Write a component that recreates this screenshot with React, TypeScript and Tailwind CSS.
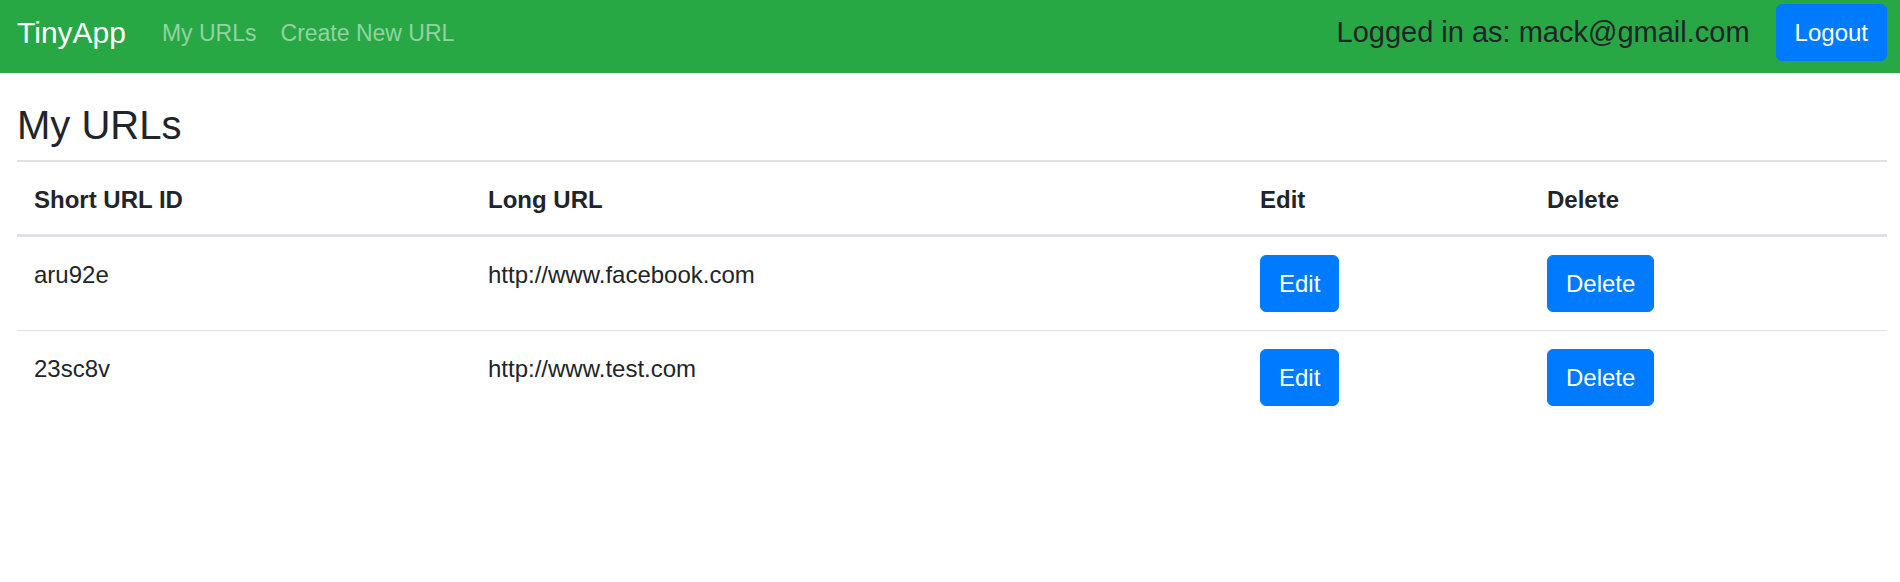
const urls = [
  { id: 'aru92e', longURL: 'http://www.facebook.com' },
  { id: '23sc8v', longURL: 'http://www.test.com' },
];

const font = { fontFamily: '"Liberation Sans", Arial, sans-serif' };

function BlueButton({ title }: { title: string }) {
  return (
    <button className="h-[57px] rounded-[6px] border-[1.5px] border-[#007bff] bg-[#007bff] px-[18px] text-[24px] leading-[36px] text-white">
      {title}
    </button>
  );
}

export default function App() {
  return (
    <div className="min-h-[582px] bg-white text-[#212529]" style={font}>
      <nav className="flex h-[73px] items-center bg-[#28a745] pt-[4px] pb-[12px] pl-[17px] pr-[13px]">
        <a className="mr-[24px] text-[30px] leading-[45px] text-white">TinyApp</a>
        <a className="px-[12px] text-[23px] leading-[36px] text-[#93d3a2]">My URLs</a>
        <a className="px-[12px] text-[23px] leading-[36px] text-[#93d3a2]">Create New URL</a>
        <div className="ml-auto flex items-center gap-[26px]">
          <span className="text-[29px] leading-[43px] text-[#212529]">Logged in as: mack@gmail.com</span>
          <BlueButton title="Logout" />
        </div>
      </nav>

      <main className="pl-[17px] pr-[13px]">
        <h3 className="mt-[28px] mb-[11px] text-[40px] leading-[48px] font-medium">My URLs</h3>
        <table className="w-full table-fixed border-collapse text-[24px] leading-[36px]">
          <colgroup>
            <col className="w-[454px]" />
            <col className="w-[772px]" />
            <col className="w-[287px]" />
            <col />
          </colgroup>
          <thead>
            <tr className="border-t-2 border-b-[3px] border-[#dee2e6]">
              <th className="px-[17px] pt-[20px] pb-[16px] text-left font-bold">Short URL ID</th>
              <th className="px-[17px] pt-[20px] pb-[16px] text-left font-bold">Long URL</th>
              <th className="px-[17px] pt-[20px] pb-[16px] text-left font-bold">Edit</th>
              <th className="px-[17px] pt-[20px] pb-[16px] text-left font-bold">Delete</th>
            </tr>
          </thead>
          <tbody>
            {urls.map((url, i) => (
              <tr key={url.id} className={i === 0 ? 'border-b border-[#dee2e6]' : ''}>
                <td className="px-[17px] pt-[20px] align-top">{url.id}</td>
                <td className="px-[17px] pt-[20px] align-top">{url.longURL}</td>
                <td className="px-[17px] py-[18px] align-top">
                  <BlueButton title="Edit" />
                </td>
                <td className="px-[17px] py-[18px] align-top">
                  <BlueButton title="Delete" />
                </td>
              </tr>
            ))}
          </tbody>
        </table>
      </main>
    </div>
  );
}
